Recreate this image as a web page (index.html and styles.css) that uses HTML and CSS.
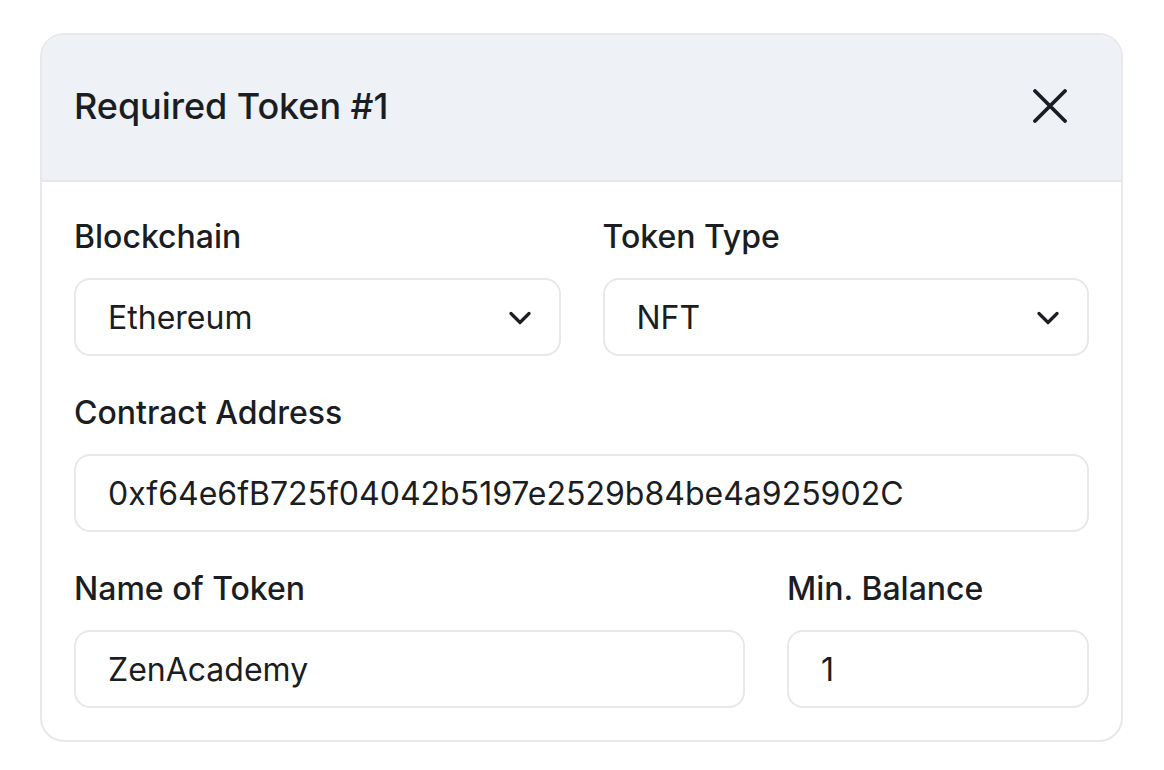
FILE: index.html
```html
<!DOCTYPE html>
<html lang="en">
<head>
<meta charset="utf-8">
<title>Required Token</title>
<link rel="stylesheet" href="styles.css">
</head>
<body>
<div class="card">
  <div class="card-header">
    <h2 class="title">Required Token #1</h2>
    <button class="close" aria-label="Close">
      <svg width="34" height="34" viewBox="0 0 34 34" fill="none" stroke="currentColor" stroke-width="3.8" stroke-linecap="round"><path d="M2 2 L32 32 M32 2 L2 32"/></svg>
    </button>
  </div>
  <div class="card-body">
    <div class="row two">
      <div class="field">
        <label class="label">Blockchain</label>
        <div class="control select"><span>Ethereum</span>
          <svg class="chev" width="22" height="14" viewBox="0 0 22 14" fill="none" stroke="currentColor" stroke-width="3.2" stroke-linecap="round" stroke-linejoin="round"><path d="M2 2.5 L11 11.5 L20 2.5"/></svg>
        </div>
      </div>
      <div class="field">
        <label class="label">Token Type</label>
        <div class="control select"><span>NFT</span>
          <svg class="chev" width="22" height="14" viewBox="0 0 22 14" fill="none" stroke="currentColor" stroke-width="3.2" stroke-linecap="round" stroke-linejoin="round"><path d="M2 2.5 L11 11.5 L20 2.5"/></svg>
        </div>
      </div>
    </div>
    <div class="row">
      <div class="field">
        <label class="label">Contract Address</label>
        <input class="control" type="text" value="0xf64e6fB725f04042b5197e2529b84be4a925902C">
      </div>
    </div>
    <div class="row last">
      <div class="field">
        <label class="label">Name of Token</label>
        <input class="control" type="text" value="ZenAcademy">
      </div>
      <div class="field">
        <label class="label">Min. Balance</label>
        <input class="control" type="text" value="1">
      </div>
    </div>
  </div>
</div>
</body>
</html>
```

FILE: styles.css
```css
* { box-sizing: border-box; }
html, body {
  margin: 0;
  padding: 0;
  background: #ffffff;
}
body {
  font-family: Inter, "Noto Sans", sans-serif;
  color: #1a1d22;
  padding: 33px 41px 0 40px;
}
.card {
  width: 1083px;
  border: 2px solid #e6e8ec;
  border-radius: 24px;
  overflow: hidden;
  background: #fff;
}
.card-header {
  height: 147px;
  background: #eef1f5;
  border-bottom: 2px solid #e4e7eb;
  display: flex;
  align-items: center;
  justify-content: space-between;
  padding: 0 54px 3px 32px;
}
.title {
  margin: 0;
  font-size: 36px;
  font-weight: 500;
  line-height: 1;
  letter-spacing: -0.05px;
}
.close {
  border: 0;
  background: none;
  padding: 0;
  color: #1a1d22;
  display: flex;
  cursor: pointer;
}
.card-body {
  padding: 32px 32px 32px 32px;
  display: flex;
  flex-direction: column;
  gap: 34px;
}
.row {
  display: grid;
  grid-template-columns: 1fr;
  column-gap: 42px;
}
.row.two { grid-template-columns: 1fr 1fr; }
.row.last { grid-template-columns: 1fr 302px; }
.field {
  display: flex;
  flex-direction: column;
  gap: 16px;
}
.label {
  font-size: 32px;
  font-weight: 500;
  line-height: 46px;
  height: 48px;
}
.control {
  height: 78px;
  border: 2px solid #e6e8ec;
  border-radius: 16px;
  background: #fff;
  padding: 0 28px 0 32px;
  font-family: inherit;
  font-size: 32px;
  font-weight: 400;
  color: #1a1d22;
  width: 100%;
  outline: none;
}
.select {
  display: flex;
  align-items: center;
  justify-content: space-between;
}
.chev { color: #1a1d22; margin-top: 1px; }
```
